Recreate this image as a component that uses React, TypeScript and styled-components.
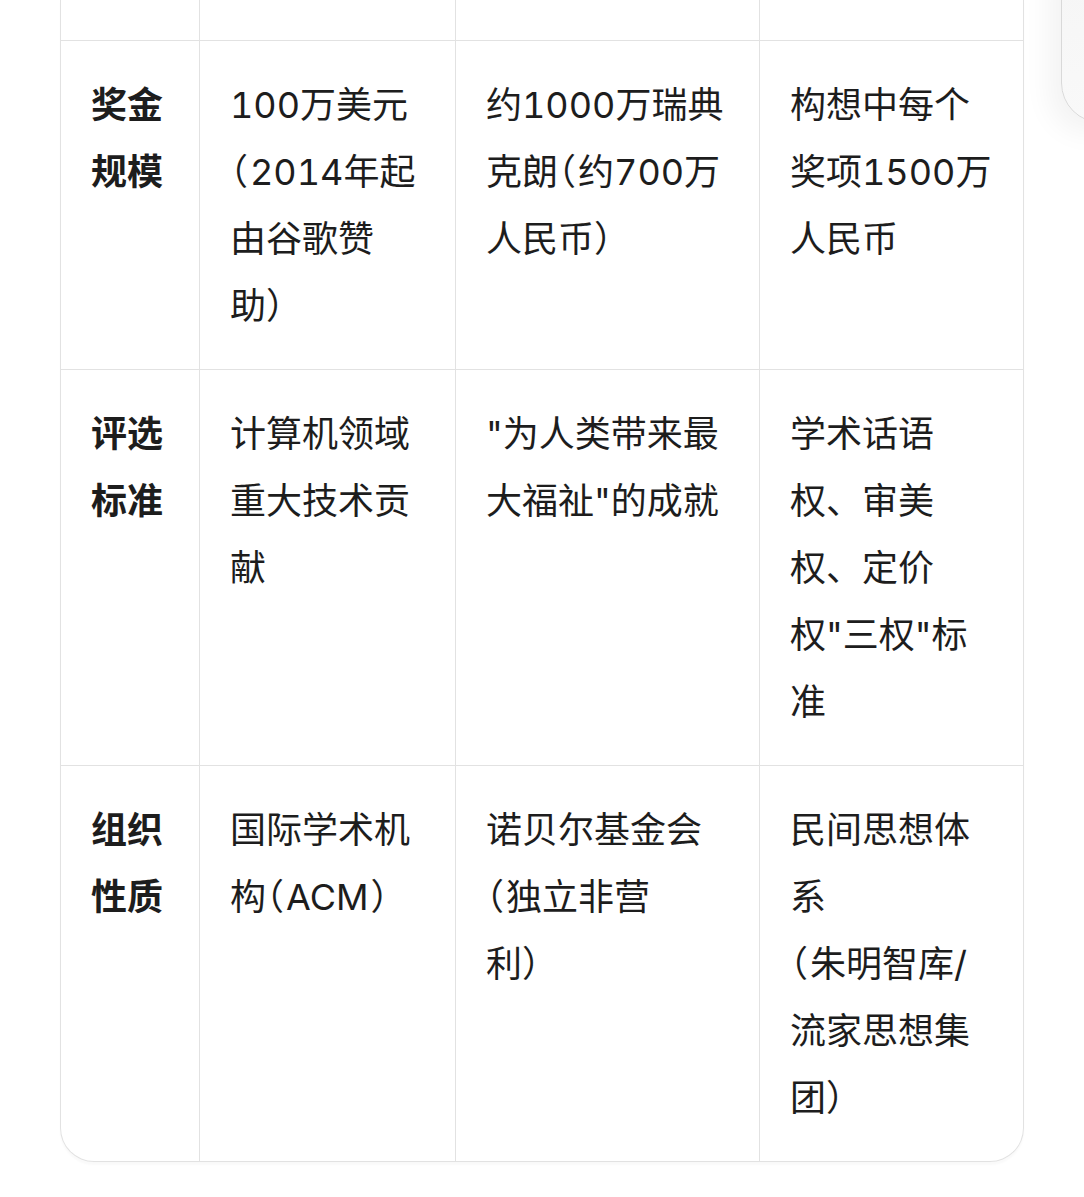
import React from 'react';
import styled, { createGlobalStyle } from 'styled-components';

interface Row {
  label: string[];
  cells: string[][];
}

const rows: Row[] = [
  {
    label: ['奖金', '规模'],
    cells: [
      ['100万美元', '（2014年起', '由谷歌赞', '助）'],
      ['约1000万瑞典', '克朗（约700万', '人民币）'],
      ['构想中每个', '奖项1500万', '人民币'],
    ],
  },
  {
    label: ['评选', '标准'],
    cells: [
      ['计算机领域', '重大技术贡', '献'],
      ['"为人类带来最', '大福祉"的成就'],
      ['学术话语', '权、审美', '权、定价', '权"三权"标', '准'],
    ],
  },
  {
    label: ['组织', '性质'],
    cells: [
      ['国际学术机', '构（ACM）'],
      ['诺贝尔基金会', '（独立非营', '利）'],
      ['民间思想体', '系', '（朱明智库/', '流家思想集', '团）'],
    ],
  },
];

const GlobalStyle = createGlobalStyle`
  html, body {
    margin: 0;
    padding: 0;
    background: #ffffff;
    overflow-x: hidden;
  }
  body {
    font-family: Inter, "Noto Sans CJK SC", sans-serif;
    color: #1d1d1d;
  }
`;

const Page = styled.div`
  position: relative;
  padding: 0 60px;
  min-height: 1197px;
  box-sizing: border-box;
`;

const Table = styled.div`
  width: 964px;
  box-sizing: border-box;
  border: 1px solid #e2e2e2;
  border-top: none;
  border-radius: 0 0 34px 34px;
  overflow: hidden;
  box-shadow: 0 3px 2px rgba(0, 0, 0, 0.025);
`;

const TableRow = styled.div<{ $last?: boolean }>`
  display: grid;
  grid-template-columns: 139px 256px 304px 263px;
  border-bottom: ${(p) => (p.$last ? 'none' : '1px solid #e2e2e2')};
`;

const Cell = styled.div<{ $head?: boolean; $stub?: boolean }>`
  box-sizing: border-box;
  height: ${(p) => (p.$stub ? '40px' : 'auto')};
  padding: ${(p) => (p.$stub ? '0' : '31px 30px 29px')};
  border-right: 1px solid #e2e2e2;
  font-size: 36px;
  line-height: 67px;
  font-weight: ${(p) => (p.$head ? 700 : 400)};
  font-variant-numeric: tabular-nums;

  &:last-child {
    border-right: none;
  }
`;

const Line = styled.span`
  display: block;
  white-space: nowrap;
`;

// full-width brackets set half-width, as in the source font
const Paren = styled.span`
  font-family: "Noto Sans CJK SC", sans-serif;
  font-feature-settings: "halt";
  line-height: 1;
  padding: 0 2px;

  &:first-child {
    padding-left: 0;
  }
`;

const SideHandle = styled.div`
  position: absolute;
  top: -60px;
  left: 1061px;
  width: 80px;
  height: 183px;
  box-sizing: border-box;
  border: 1px solid #d9d9d9;
  border-radius: 40px;
  background: linear-gradient(180deg, #f5f5f5 0%, #f9f9f9 100%);
  box-shadow: -12px 10px 28px rgba(0, 0, 0, 0.05);
`;

const Lines: React.FC<{ lines: string[] }> = ({ lines }) => (
  <>
    {lines.map((l, i) => (
      <Line key={i}>
        {l
          .split(/([（）])/)
          .filter((part) => part !== '')
          .map((part, k) =>
            part === '（' || part === '）' ? <Paren key={k}>{part}</Paren> : part
          )}
      </Line>
    ))}
  </>
);

export default function App() {
  return (
    <>
      <GlobalStyle />
      <Page>
        <Table>
          <TableRow>
            <Cell $stub />
            <Cell $stub />
            <Cell $stub />
            <Cell $stub />
          </TableRow>
          {rows.map((row, i) => (
            <TableRow key={i} $last={i === rows.length - 1}>
              <Cell $head>
                <Lines lines={row.label} />
              </Cell>
              {row.cells.map((c, j) => (
                <Cell key={j}>
                  <Lines lines={c} />
                </Cell>
              ))}
            </TableRow>
          ))}
        </Table>
        <SideHandle />
      </Page>
    </>
  );
}
